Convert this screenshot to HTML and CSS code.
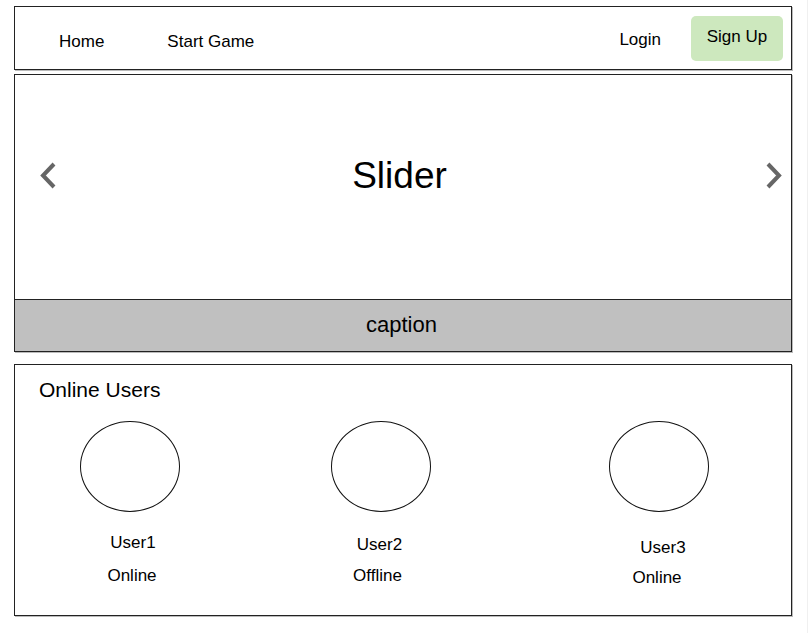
FILE: index.html
```html
<!DOCTYPE html>
<html>
<head>
<meta charset="utf-8">
<link rel="stylesheet" href="styles.css">
</head>
<body>
<div class="page">
  <nav class="nav">
    <a class="nav-link nav-home">Home</a>
    <a class="nav-link nav-start">Start Game</a>
    <span class="spacer"></span>
    <a class="nav-link nav-login">Login</a>
    <a class="signup">Sign Up</a>
  </nav>

  <section class="slider">
    <div class="slide">
      <svg class="arrow arrow-prev" width="22" height="32" viewBox="0 0 22 32"><path d="M17 4 L6 15.5 L17 27" fill="none" stroke="#666" stroke-width="4"/></svg>
      <div class="slide-title">Slider</div>
      <svg class="arrow arrow-next" width="22" height="32" viewBox="0 0 22 32"><path d="M5 4 L16 15.5 L5 27" fill="none" stroke="#666" stroke-width="4"/></svg>
    </div>
    <div class="caption">caption</div>
  </section>

  <section class="users">
    <h2 class="users-title">Online Users</h2>
    <div class="user-row">
      <div class="user user-1">
        <div class="avatar"></div>
        <div class="user-name">User1</div>
        <div class="user-status">Online</div>
      </div>
      <div class="user user-2">
        <div class="avatar"></div>
        <div class="user-name">User2</div>
        <div class="user-status">Offline</div>
      </div>
      <div class="user user-3">
        <div class="avatar"></div>
        <div class="user-name">User3</div>
        <div class="user-status">Online</div>
      </div>
    </div>
  </section>
</div>
</body>
</html>
```

FILE: styles.css
```css
* { box-sizing: border-box; }
html, body {
  margin: 0;
  padding: 0;
  background: #fff;
}
body {
  font-family: "Liberation Sans", Arial, sans-serif;
  color: #000;
}
.page {
  width: 808px;
  height: 633px;
  padding: 6px 15px 0 14px;
  border-right: 1px solid #f0f0f0;
}
.nav, .slider, .users {
  border: 1px solid #222;
  box-shadow: 1px 1px 0 #bbb;
}
.nav {
  height: 64px;
  display: flex;
  align-items: center;
  padding: 0 8px 0 44px;
}
.nav-link {
  font-size: 17px;
  line-height: 20px;
  cursor: pointer;
}
.nav-home { margin-top: 7px; }
.nav-start { margin-left: 63px; margin-top: 7px; }
.spacer { flex: 1; }
.nav-login { margin-top: 4px; margin-right: 30px; }
.signup {
  width: 92px;
  height: 45px;
  margin-top: 1px;
  background: #cde8be;
  border-radius: 5px;
  font-size: 17px;
  display: flex;
  align-items: center;
  justify-content: center;
  padding-bottom: 3px;
}
.slider {
  margin-top: 4px;
  height: 278px;
  display: flex;
  flex-direction: column;
}
.slide {
  height: 225px;
  display: grid;
  grid-template-columns: 1fr auto 1fr;
  align-items: center;
  padding-bottom: 22px;
}
.arrow-prev { justify-self: start; margin-left: 22px; }
.arrow-next { justify-self: end; margin-right: 6px; }
.slide-title {
  font-size: 37px;
  line-height: 42px;
  margin-right: 7px;
}
.caption {
  height: 52px;
  border-top: 1px solid #222;
  background: #c0c0c0;
  font-size: 22px;
  display: flex;
  align-items: center;
  justify-content: center;
  padding-bottom: 2px;
  padding-right: 3px;
}
.users {
  margin-top: 12px;
  height: 252px;
  padding: 13px 24px 0 24px;
}
.users-title {
  margin: 0;
  font-size: 21px;
  font-weight: normal;
  line-height: 24px;
}
.user-row {
  display: flex;
  margin-top: 19px;
  padding-left: 41px;
}
.user {
  width: 100px;
  display: flex;
  flex-direction: column;
  align-items: center;
  font-size: 17px;
  line-height: 20px;
}
.user-2 { margin-left: 151px; }
.user-3 { margin-left: 178px; }
.avatar {
  width: 100px;
  height: 91px;
  border: 1px solid #111;
  border-radius: 50%;
}
.user-name { margin-top: 21px; }
.user-status { margin-top: 13px; }
.user-1 .user-name { margin-left: 6px; }
.user-1 .user-status { margin-left: 4px; }
.user-2 .user-name { margin-top: 23px; margin-left: -3px; }
.user-2 .user-status { margin-top: 11px; margin-left: -7px; }
.user-3 .user-name { margin-top: 26px; margin-left: 8px; }
.user-3 .user-status { margin-top: 10px; margin-left: -4px; }
```
